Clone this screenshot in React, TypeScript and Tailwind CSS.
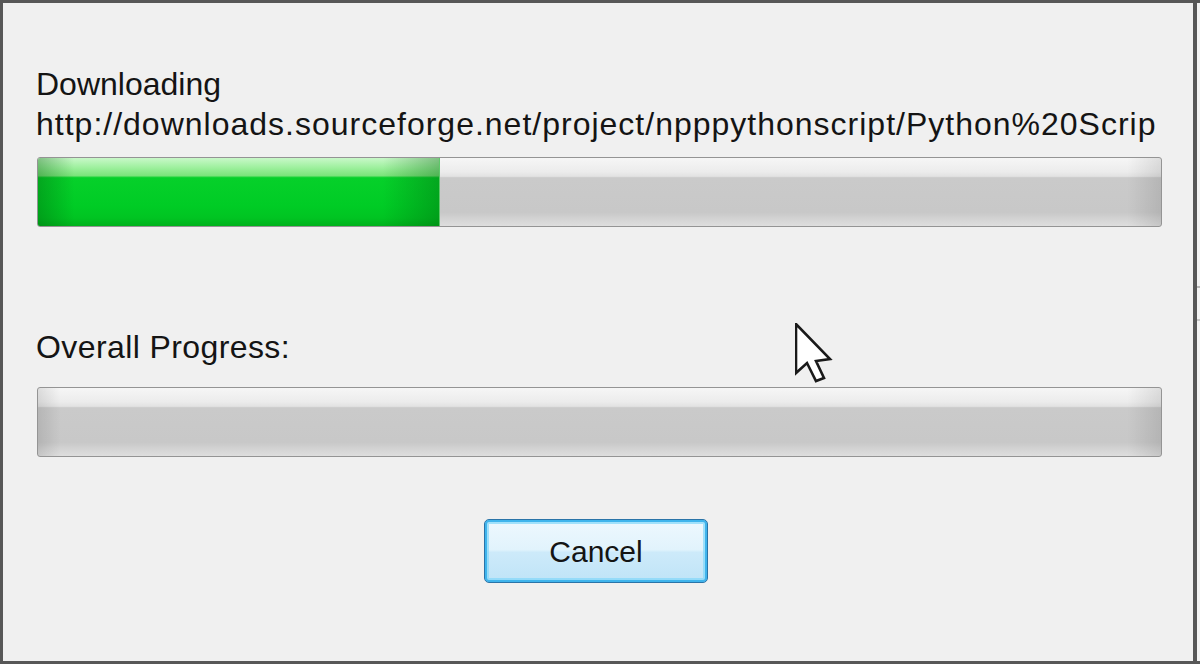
import type { ReactNode } from "react";

const FONT = "font-['Liberation_Sans',Arial,sans-serif]";

function Bar({ value, children }: { value: number; children?: ReactNode }) {
  return (
    <div className="relative ml-[1px] flex h-[70px] w-[1125px] overflow-hidden rounded-[3px] border border-[#949494] bg-[linear-gradient(to_bottom,#f6f6f6_0%,#ececec_20%,#e2e2e2_27%,#cacaca_29%,#c8c8c8_80%,#d6d6d6_92%,#dedede_100%)]">
      <div className="pointer-events-none absolute inset-0 bg-[linear-gradient(to_right,rgba(0,0,0,0.1)_0%,rgba(0,0,0,0)_2%,rgba(0,0,0,0)_97%,rgba(0,0,0,0.1)_100%)]" />
      {value > 0 ? (
        <div
          className="relative h-full border-r border-[#5fc86a] bg-[linear-gradient(to_bottom,#c9f8c9_0%,#9ef09e_14%,#7ae47a_26%,#06d02a_29%,#00cc25_70%,#00c422_88%,#00b21c_100%)]"
          style={{ width: `${value}%` }}
        >
          <div className="absolute inset-0 bg-[linear-gradient(to_right,rgba(0,90,10,0.35)_0%,rgba(0,90,10,0)_9%,rgba(0,90,10,0)_86%,rgba(0,90,10,0.35)_100%)]" />
        </div>
      ) : null}
      {children}
    </div>
  );
}

function Cursor() {
  return (
    <svg
      className="absolute left-[795px] top-[320px]"
      width="38"
      height="60"
      viewBox="0 0 38 60"
    >
      <path
        d="M1 1 L1 50 L12 40 L21 58 L29 55 L21 38 L35 36 Z"
        fill="#ffffff"
        stroke="#1a1a1a"
        strokeWidth="2.6"
        strokeLinejoin="miter"
      />
    </svg>
  );
}

export default function App() {
  return (
    <div
      className={`relative flex h-[664px] w-[1200px] overflow-hidden border-y-[3px] border-[#575757] bg-[#f0f0f0] text-[#141414] ${FONT}`}
    >
      <div className="flex h-full w-[1197px] flex-col border-l-[3px] border-r-[4px] border-[#575757] bg-[#f0f0f0] pl-[33px] pt-[61px]">
        <div className="text-[32px] leading-[40px]">Downloading</div>
        <div className="w-[1127px] overflow-hidden whitespace-nowrap text-[32px] leading-[40px] tracking-[1px]">
          http://downloads.sourceforge.net/project/npppythonscript/Python%20Scrip
        </div>

        <div className="mt-[13px]">
          <Bar value={35.8} />
        </div>

        <div className="mt-[100px] text-[32px] leading-[40px] tracking-[0.4px]">
          Overall Progress:
        </div>

        <div className="mt-[20px]">
          <Bar value={0} />
        </div>

        <button
          type="button"
          className="ml-[448px] mt-[62px] flex h-[64px] w-[224px] items-center justify-center rounded-[5px] border border-[#2a74a8] bg-[linear-gradient(to_bottom,#eef8fe_0%,#e1f3fc_48%,#cdeafa_52%,#bfe4f7_100%)] text-[30px] text-[#141414] shadow-[inset_0_0_0_2px_#3fb4ec,inset_0_0_0_4px_rgba(130,215,250,0.7)]"
        >
          Cancel
        </button>
      </div>

      <div className="flex h-full w-[3px] flex-col bg-[#f3f3f3]">
        <div className="mt-[283px] h-[2px] w-full bg-[#b8b8b8]" />
        <div className="mt-[31px] h-[2px] w-full bg-[#c8c8c8]" />
      </div>

      <Cursor />
    </div>
  );
}
